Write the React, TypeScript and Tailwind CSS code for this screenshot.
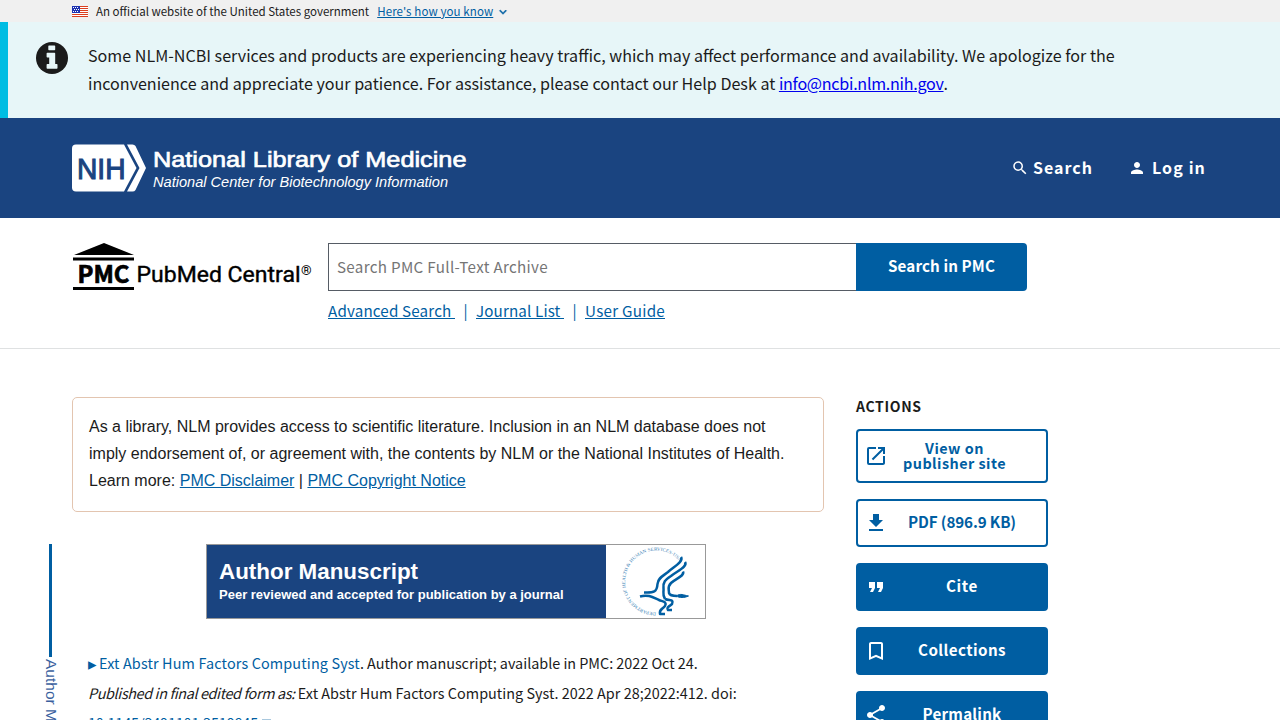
import type { ReactNode } from "react";

function Glyph({ d, className }: { d: string; className: string }) {
  return (
    <svg viewBox="0 0 24 24" fill="currentColor" className={className} aria-hidden="true">
      <path d={d} />
    </svg>
  );
}

const icons = {
  search: "M15.5 14h-.79l-.28-.27A6.471 6.471 0 0 0 16 9.5 6.5 6.5 0 1 0 9.5 16c1.61 0 3.09-.59 4.23-1.57l.27.28v.79l5 4.99L20.49 19l-4.99-5zm-6 0C7.01 14 5 11.99 5 9.5S7.01 5 9.5 5 14 7.01 14 9.5 11.99 14 9.5 14z",
  person: "M12 12c2.21 0 4-1.79 4-4s-1.79-4-4-4-4 1.79-4 4 1.79 4 4 4zm0 2c-2.67 0-8 1.34-8 4v2h16v-2c0-2.66-5.33-4-8-4z",
  chevron: "M16.59 8.59 12 13.17 7.41 8.59 6 10l6 6 6-6z",
  launch: "M19 19H5V5h7V3H5a2 2 0 0 0-2 2v14a2 2 0 0 0 2 2h14c1.1 0 2-.9 2-2v-7h-2v7zM14 3v2h3.59l-9.83 9.83 1.41 1.41L19 6.41V10h2V3h-7z",
  download: "M19 9h-4V3H9v6H5l7 7 7-7zM5 18v2h14v-2H5z",
  quote: "M6 17h3l2-4V7H5v6h3zm8 0h3l2-4V7h-6v6h3z",
  bookmark: "M17 3H7c-1.1 0-1.99.9-1.99 2L5 21l7-3 7 3V5c0-1.1-.9-2-2-2zm0 15-5-2.18L7 18V5h10v13z",
  share: "M18 16.08c-.76 0-1.44.3-1.96.77L8.91 12.7c.05-.23.09-.46.09-.7s-.04-.47-.09-.7l7.05-4.11c.54.5 1.25.81 2.04.81 1.66 0 3-1.34 3-3s-1.34-3-3-3-3 1.34-3 3c0 .24.04.47.09.7L8.04 9.81C7.5 9.31 6.79 9 6 9c-1.66 0-3 1.34-3 3s1.34 3 3 3c.79 0 1.5-.31 2.04-.81l7.12 4.16c-.05.21-.08.43-.08.65 0 1.61 1.31 2.92 2.92 2.92s2.92-1.31 2.92-2.92-1.31-2.92-2.92-2.92z",
};

function Flag() {
  return (
    <svg viewBox="0 0 16 11" className="h-[11px] w-4" shapeRendering="crispEdges" aria-hidden="true">
      <rect width="16" height="11" fill="#fff" />
      <path d="M0 0h16v1H0zM0 2h16v1H0zM0 4h16v1H0zM0 6h16v1H0zM0 8h16v1H0zM0 10h16v1H0z" fill="#db3e1f" />
      <rect width="8" height="7" fill="#1e33b1" />
      <path d="M1 1h1v1H1zM3 1h1v1H3zM5 1h1v1H5zM2 3h1v1H2zM4 3h1v1H4zM6 3h1v1H6zM1 5h1v1H1zM3 5h1v1H3zM5 5h1v1H5z" fill="#fff" />
    </svg>
  );
}

function NlmLogo() {
  return (
    <svg viewBox="0 0 396 50" className="h-[50px] w-[396px]" role="img" aria-label="National Library of Medicine">
      <path d="M4 1.5H52L64.500 25 52 48.500H4Q0 48.500 0 44.500V5.500Q0 1.500 4 1.500Z" fill="#fff" />
      <path d="M55 1.500H60.500Q62.500 1.500 63.500 3L74 25 63.500 47Q62.500 48.500 60.500 48.500H55L67.500 25Z" fill="#fff" />
      <text x="5" y="35.500" fontSize="30" textLength="48.500" lengthAdjust="spacingAndGlyphs" fill="#1a4480" stroke="#1a4480" strokeWidth="1.100" className="font-['Liberation_Sans',sans-serif]">NIH</text>
      <text x="81" y="24" fontSize="22.800" textLength="313.500" lengthAdjust="spacingAndGlyphs" fill="#fff" stroke="#fff" strokeWidth=".7" className="font-['Liberation_Sans',sans-serif]">National Library of Medicine</text>
      <text x="81" y="44" fontSize="14.600" textLength="295" lengthAdjust="spacingAndGlyphs" fill="#fff" fontStyle="italic" className="font-['Liberation_Sans',sans-serif]">National Center for Biotechnology Information</text>
    </svg>
  );
}

function PmcLogo() {
  return (
    <svg viewBox="0 0 240 48" className="h-12 w-60" role="img" aria-label="PubMed Central">
      <path d="M32 0 62 12H2ZM1 14.500H62V17.500H1ZM1 44H62V47H1Z" />
      <text x="5.500" y="40" fontSize="24" fontWeight="700" textLength="52" lengthAdjust="spacingAndGlyphs" stroke="#000" strokeWidth=".7" className="font-['Noto_Sans_CJK_SC',sans-serif]">PMC</text>
      <text x="64.500" y="38.500" fontSize="22.500" fontWeight="400" textLength="164" lengthAdjust="spacingAndGlyphs" stroke="#000" strokeWidth=".4" className="font-[Roboto,sans-serif]">PubMed Central</text>
      <text x="229" y="32" fontSize="13.500" className="font-[Roboto,sans-serif]">®</text>
    </svg>
  );
}

function HhsSeal() {
  return (
    <svg viewBox="0 0 99 73" className="h-[73px] w-[99px]" role="img" aria-label="Health and Human Services">
      <path id="ring" d="M50 67.500A31 31 0 1 1 73 15.500" fill="none" />
      <text fontSize="4.600" fill="#3b82b5" className="font-['Liberation_Serif',serif]">
        <textPath href="#ring" textLength="124" lengthAdjust="spacingAndGlyphs">DEPARTMENT OF HEALTH &amp; HUMAN SERVICES·USA</textPath>
      </text>
      <g fill="none" stroke="#005ea2" strokeWidth="2.500" strokeLinejoin="round">
        <path d="M75 12C78 17 67 22 62 27C57 31 52 33 51.500 39C51 47 48 48 38 47.500" />
        <path d="M79 17C82 22 71 26 65 31C59 35 57 37 57.500 43C58 48 56 49 59 54" />
        <path d="M77 26.500C79 31 69 34 65 38C61 42 63 44 63 48C64 51 68 51 71 51" />
        <path d="M34 51.500C43 49 48 53 53 55C58 57 61 57 59 61C56 65 53 64 54 69H59" />
        <path d="M59 54C64 56 68 54 66 59C63 62 60 62 62 65H66" />
        <path d="M70 51C75 48 77 50 82.500 51C78 53 74 53 70 51Z" fill="#005ea2" strokeWidth="1" />
      </g>
    </svg>
  );
}

function ActionButton({ icon, filled, tall, children }: { icon: string; filled?: boolean; tall?: boolean; children: ReactNode }) {
  return (
    <button
      className={`flex w-48 items-center rounded border-2 border-[#005ea2] pl-1.5 font-bold ${
        tall ? "h-[54px] pr-[25px] text-[14.4px] leading-[15px]" : "h-12 pr-2.5 text-[15.2px] leading-4"
      } ${filled ? "bg-[#005ea2] text-white" : "bg-white text-[#005ea2]"}`}
    >
      <Glyph d={icon} className="size-6 shrink-0" />
      <span className={`flex-1 text-center ${tall ? "pb-0.5" : "pb-[5px]"}`}>{children}</span>
    </button>
  );
}

export default function App() {
  return (
    <div className="h-[720px] w-full overflow-hidden bg-white font-['Noto_Sans_CJK_SC',sans-serif] text-[#1b1b1b]">
      <div className="flex h-[22px] items-center bg-[#f0f0f0] pl-[72px] text-[11.52px] leading-4 whitespace-nowrap">
        <Flag />
        <span className="ml-2">An official website of the United States government</span>
        <a className="ml-2 tracking-[0.1px] text-[#005ea2] underline">Here's how you know</a>
        <Glyph d={icons.chevron} className="mt-px ml-[3px] size-[14px] stroke-current text-[#005ea2]" />
      </div>

      <div className="flex h-24 border-l-8 border-[#00bde3] bg-[#e7f6f8] pt-[19px] pl-7">
        <svg viewBox="0 0 32 32" className="mt-px size-8 shrink-0" aria-hidden="true">
          <circle cx="16" cy="16" r="16" fill="#1b1b1b" />
          <path d="M13 3.500h5.500q.7 0 .7.700v3.300q0 .7-.7.700H13q-.7 0-.7-.7V4.200q0-.7.700-.7ZM11.300 10.700h7.200q.7 0 .7.700V22h1.600q.7 0 .7.700v3.300q0 .7-.7.700h-9.500q-.7 0-.7-.7v-3.300q0-.7.700-.7h1.900v-6.600h-1.900q-.7 0-.7-.7v-3.300q0-.7.700-.7Z" fill="#e7f6f8" />
        </svg>
        <p className="ml-5 text-[16.1px] leading-7 whitespace-nowrap">
          Some NLM-NCBI services and products are experiencing heavy traffic, which may affect performance and availability. We apologize for the
          <br />
          inconvenience and appreciate your patience. For assistance, please contact our Help Desk at{" "}
          <a className="tracking-[-0.27px] text-[#0000ee] underline">info@ncbi.nlm.nih.gov</a>.
        </p>
      </div>

      <header className="flex h-[100px] items-center bg-[#1a4480] pr-[74px] pl-[72px]">
        <NlmLogo />
        <nav className="ml-auto flex items-center gap-[35px] text-[16px] font-bold text-white">
          <a className="flex items-center gap-1"><Glyph d={icons.search} className="size-[18px]" /><span className="pb-0.5 tracking-[1px]">Search</span></a>
          <a className="flex items-center gap-1.5"><Glyph d={icons.person} className="size-[18px]" /><span className="pb-0.5 tracking-[1.11px]">Log in</span></a>
        </nav>
      </header>

      <section className="flex h-[131px] border-b border-[#dfe1e2] pt-[25px] pl-[72px]">
        <PmcLogo />
        <div className="ml-4">
          <div className="flex">
            <div className="flex h-12 w-[528px] items-center border border-r-0 border-[#565c65] pb-0.5 pl-2 text-[15.2px] tracking-[0.31px] text-[#757575]">Search PMC Full-Text Archive</div>
            <button className="h-12 w-[171px] rounded-r bg-[#005ea2] pb-[3px] text-[15.2px] font-bold tracking-[0.11px] text-white">Search in PMC</button>
          </div>
          <div className="mt-[7px] flex text-[15.2px] leading-6 text-[#005ea2]">
            <a className="tracking-[0.154px] whitespace-pre underline">Advanced Search </a>
            <span className="w-[21px] text-center">|</span>
            <a className="tracking-[0.131px] whitespace-pre underline">Journal List </a>
            <span className="w-[21px] text-center">|</span>
            <a className="tracking-[0.26px] underline">User Guide</a>
          </div>
        </div>
      </section>

      <main className="flex pt-12 pl-[43px]">
        <aside className="mr-[15px] flex w-[14px] flex-col items-center pt-[147px]">
          <div className="h-[113px] w-[3px] bg-[#005ea2]" />
          <div className="mt-[2px] ml-px font-['Liberation_Sans',sans-serif] text-[15.5px] leading-[14px] whitespace-nowrap text-[#3a5f9e] [writing-mode:vertical-rl]">Author Manuscript</div>
        </aside>
        <article className="w-[752px]">
          <div className="h-[115px] rounded-[5px] border border-[#e3c5b0] px-4 pt-[15px] font-['Liberation_Sans',sans-serif] text-base leading-[27px]">
            As a library, NLM provides access to scientific literature. Inclusion in an NLM database does not<br />
            imply endorsement of, or agreement with, the contents by NLM or the National Institutes of Health.<br />
            Learn more: <a className="text-[#005ea2] underline">PMC Disclaimer</a> | <a className="text-[#005ea2] underline">PMC Copyright Notice</a>
          </div>
          <div className="mx-auto mt-8 flex h-[75px] w-[500px] translate-x-2 border border-[#999]">
            <div className="flex w-[399px] flex-col bg-[#1a4480] pt-[15px] pl-3 font-['Liberation_Sans',sans-serif] font-bold text-white">
              <div className="text-[22.4px] leading-6">Author Manuscript</div>
              <div className="mt-[3px] text-[13px] leading-4">Peer reviewed and accepted for publication by a journal</div>
            </div>
            <HhsSeal />
          </div>
          <div className="mt-[29px] pl-4 text-[14.4px] leading-[30px] whitespace-nowrap">
            <div className="flex">
              <a className="flex tracking-[0.14px] text-[#005ea2]">
                <span className="w-[11px] text-[17px]">▸</span>
                Ext Abstr Hum Factors Computing Syst
              </a>
              <span className="tracking-[-0.02px]">. Author manuscript; available in PMC: 2022 Oct 24.</span>
            </div>
            <div><span className="tracking-[-0.38px] italic">Published in final edited form as:</span> <span className="tracking-[0.02px]">Ext Abstr Hum Factors Computing Syst. 2022 Apr 28;2022:412. doi:</span></div>
            <div className="text-[#005ea2]"><span className="tracking-[-0.147px]">10.1145/3491101.3519845</span><span className="ml-1 inline-block h-[10px] w-[9px] border-t-2 border-[#a9c8de]" /></div>
          </div>
        </article>
        <aside className="ml-8 flex flex-col gap-4">
          <h2 className="-mb-[3px] h-[19px] text-[14px] leading-[19px] font-bold tracking-[0.65px]">ACTIONS</h2>
          <ActionButton icon={icons.launch} tall>
            <span className="block tracking-[0.5px]">View on</span>
            <span className="block tracking-[0.46px]">publisher site</span>
          </ActionButton>
          <ActionButton icon={icons.download}><span className="tracking-[-0.13px]">PDF (896.9 KB)</span></ActionButton>
          <ActionButton icon={icons.quote} filled><span className="tracking-[0.62px]">Cite</span></ActionButton>
          <ActionButton icon={icons.bookmark} filled><span className="tracking-[0.41px]">Collections</span></ActionButton>
          <ActionButton icon={icons.share} filled><span className="tracking-[0.21px]">Permalink</span></ActionButton>
        </aside>
      </main>
    </div>
  );
}
